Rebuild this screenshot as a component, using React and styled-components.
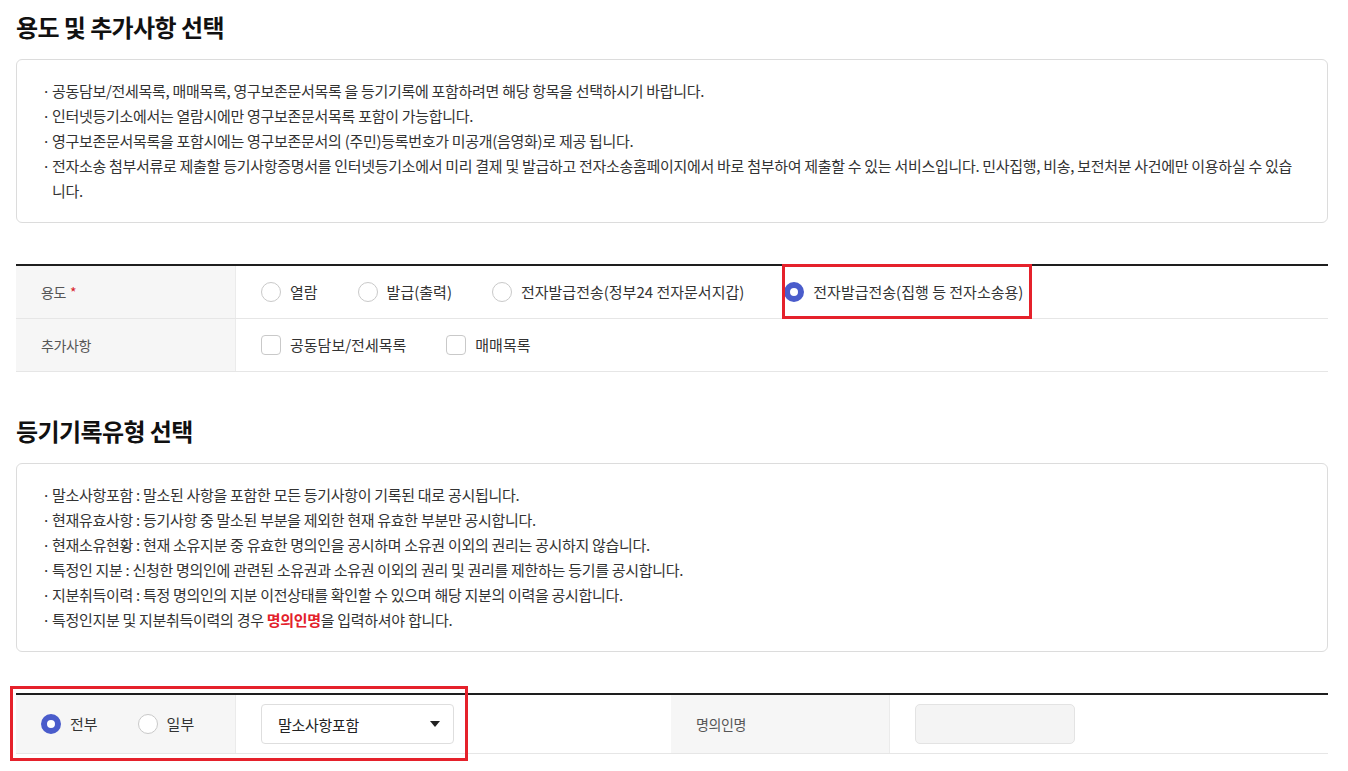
import React from 'react'
import styled, { createGlobalStyle } from 'styled-components'

const GlobalStyle = createGlobalStyle`
  * { box-sizing: border-box; }
  body {
    margin: 0;
    background: #fff;
    font-family: "Noto Sans CJK KR", "Noto Sans", sans-serif;
    color: #333;
  }
`

const Page = styled.div`
  width: 1328px;
  padding: 10px 0 30px 16px;
`

const Title = styled.h2`
  margin: ${p => p.$top || 0}px 0 0;
  font-size: 24px;
  line-height: 34px;
  font-weight: 700;
  color: #111;
  letter-spacing: -0.6px;
`

const InfoBox = styled.ul`
  list-style: none;
  margin: 15px 0 0;
  padding: 18px 30px 19px 25px;
  border: 1px solid #dcdcdc;
  border-radius: 6px;
`

const InfoItem = styled.li`
  position: relative;
  padding-left: 10px;
  font-size: 15px;
  line-height: 25px;
  letter-spacing: -0.3px;
  color: #333;
  &::before {
    content: '·';
    position: absolute;
    left: 0;
    top: 0;
  }
`

const Strong = styled.b`
  color: #e3202a;
  font-weight: 700;
`

const Table = styled.div`
  position: relative;
  margin-top: ${p => p.$top}px;
  border-top: 2px solid #1e1e1e;
`

const Row = styled.div`
  display: grid;
  grid-template-columns: ${p => p.$cols || '220px 1fr'};
  min-height: ${p => p.$h || 53}px;
  border-bottom: 1px solid #e6e6e6;
`

const Label = styled.div`
  display: flex;
  align-items: center;
  padding-left: 25px;
  background: #f6f6f6;
  border-right: 1px solid #ebebeb;
  font-size: 14px;
  color: #555;
  letter-spacing: -0.4px;
`

const Req = styled.span`
  color: #d8222a;
  margin-left: 4px;
`

const Cell = styled.div`
  display: flex;
  align-items: center;
  gap: 40px;
  padding: 0 25px;
  background: ${p => (p.$gray ? '#f6f6f6' : '#fff')};
  border-right: ${p => (p.$divider ? '1px solid #ebebeb' : 'none')};
`

const Option = styled.label`
  position: relative;
  display: flex;
  align-items: center;
  gap: 9px;
  font-size: 15px;
  line-height: 22px;
  color: #333;
  letter-spacing: 0;
  cursor: pointer;
`

const Radio = styled.span`
  width: 20px;
  height: 20px;
  flex: none;
  border-radius: 50%;
  border: ${p => (p.$on ? '6px solid #4a5ccb' : '1px solid #c9c9c9')};
  background: #fff;
`

const Check = styled.span`
  width: 20px;
  height: 20px;
  flex: none;
  border-radius: 4px;
  border: 1px solid #c9c9c9;
  background: #fff;
`

const Select = styled.div`
  display: flex;
  align-items: center;
  justify-content: space-between;
  width: 193px;
  height: 40px;
  padding: 0 13px 0 16px;
  border: 1px solid #dedede;
  border-radius: 4px;
  font-size: 15px;
  color: #222;
  letter-spacing: -0.3px;
  background: #fff;
`

const Caret = styled.span`
  width: 0;
  height: 0;
  border-left: 5px solid transparent;
  border-right: 5px solid transparent;
  border-top: 6px solid #222;
`

const Input = styled.div`
  width: 160px;
  height: 40px;
  border: 1px solid #e3e3e3;
  border-radius: 5px;
  background: #f4f4f4;
`

const Mark = styled.div`
  position: absolute;
  left: ${p => p.$l}px;
  top: ${p => p.$t}px;
  width: ${p => p.$w}px;
  height: ${p => p.$h}px;
  border: 3px solid #e5212b;
  pointer-events: none;
  z-index: 2;
`

export default function App() {
  return (
    <>
      <GlobalStyle />
      <Page>
        <Title>용도 및 추가사항 선택</Title>
        <InfoBox>
          <InfoItem>공동담보/전세목록, 매매목록, 영구보존문서목록 을 등기기록에 포함하려면 해당 항목을 선택하시기 바랍니다.</InfoItem>
          <InfoItem>인터넷등기소에서는 열람시에만 영구보존문서목록 포함이 가능합니다.</InfoItem>
          <InfoItem>영구보존문서목록을 포함시에는 영구보존문서의 (주민)등록번호가 미공개(음영화)로 제공 됩니다.</InfoItem>
          <InfoItem>전자소송 첨부서류로 제출할 등기사항증명서를 인터넷등기소에서 미리 결제 및 발급하고 전자소송홈페이지에서 바로 첨부하여 제출할 수 있는 서비스입니다. 민사집행, 비송, 보전처분 사건에만 이용하실 수 있습니다.</InfoItem>
        </InfoBox>

        <Table $top={41}>
          <Row>
            <Label>용도<Req>*</Req></Label>
            <Cell>
              <Option><Radio />열람</Option>
              <Option><Radio />발급(출력)</Option>
              <Option><Radio />전자발급전송(정부24 전자문서지갑)</Option>
              <Option>
                <Radio $on />전자발급전송(집행 등 전자소송용)
                <Mark $l={-2} $t={-17} $w={250} $h={55} />
              </Option>
            </Cell>
          </Row>
          <Row>
            <Label>추가사항</Label>
            <Cell>
              <Option><Check />공동담보/전세목록</Option>
              <Option><Check />매매목록</Option>
            </Cell>
          </Row>
        </Table>

        <Title $top={42}>등기기록유형 선택</Title>
        <InfoBox>
          <InfoItem>말소사항포함 : 말소된 사항을 포함한 모든 등기사항이 기록된 대로 공시됩니다.</InfoItem>
          <InfoItem>현재유효사항 : 등기사항 중 말소된 부분을 제외한 현재 유효한 부분만 공시합니다.</InfoItem>
          <InfoItem>현재소유현황 : 현재 소유지분 중 유효한 명의인을 공시하며 소유권 이외의 권리는 공시하지 않습니다.</InfoItem>
          <InfoItem>특정인 지분 : 신청한 명의인에 관련된 소유권과 소유권 이외의 권리 및 권리를 제한하는 등기를 공시합니다.</InfoItem>
          <InfoItem>지분취득이력 : 특정 명의인의 지분 이전상태를 확인할 수 있으며 해당 지분의 이력을 공시합니다.</InfoItem>
          <InfoItem>특정인지분 및 지분취득이력의 경우 <Strong>명의인명</Strong>을 입력하셔야 합니다.</InfoItem>
        </InfoBox>

        <Table $top={41}>
          <Row $cols="220px 435px 219px 1fr" $h={59}>
            <Cell $gray $divider>
              <Option><Radio $on />전부</Option>
              <Option><Radio />일부</Option>
            </Cell>
            <Cell>
              <Select>말소사항포함<Caret /></Select>
            </Cell>
            <Label>명의인명</Label>
            <Cell>
              <Input />
            </Cell>
          </Row>
          <Mark $l={-6} $t={-9} $w={458} $h={75} />
        </Table>
      </Page>
    </>
  )
}
